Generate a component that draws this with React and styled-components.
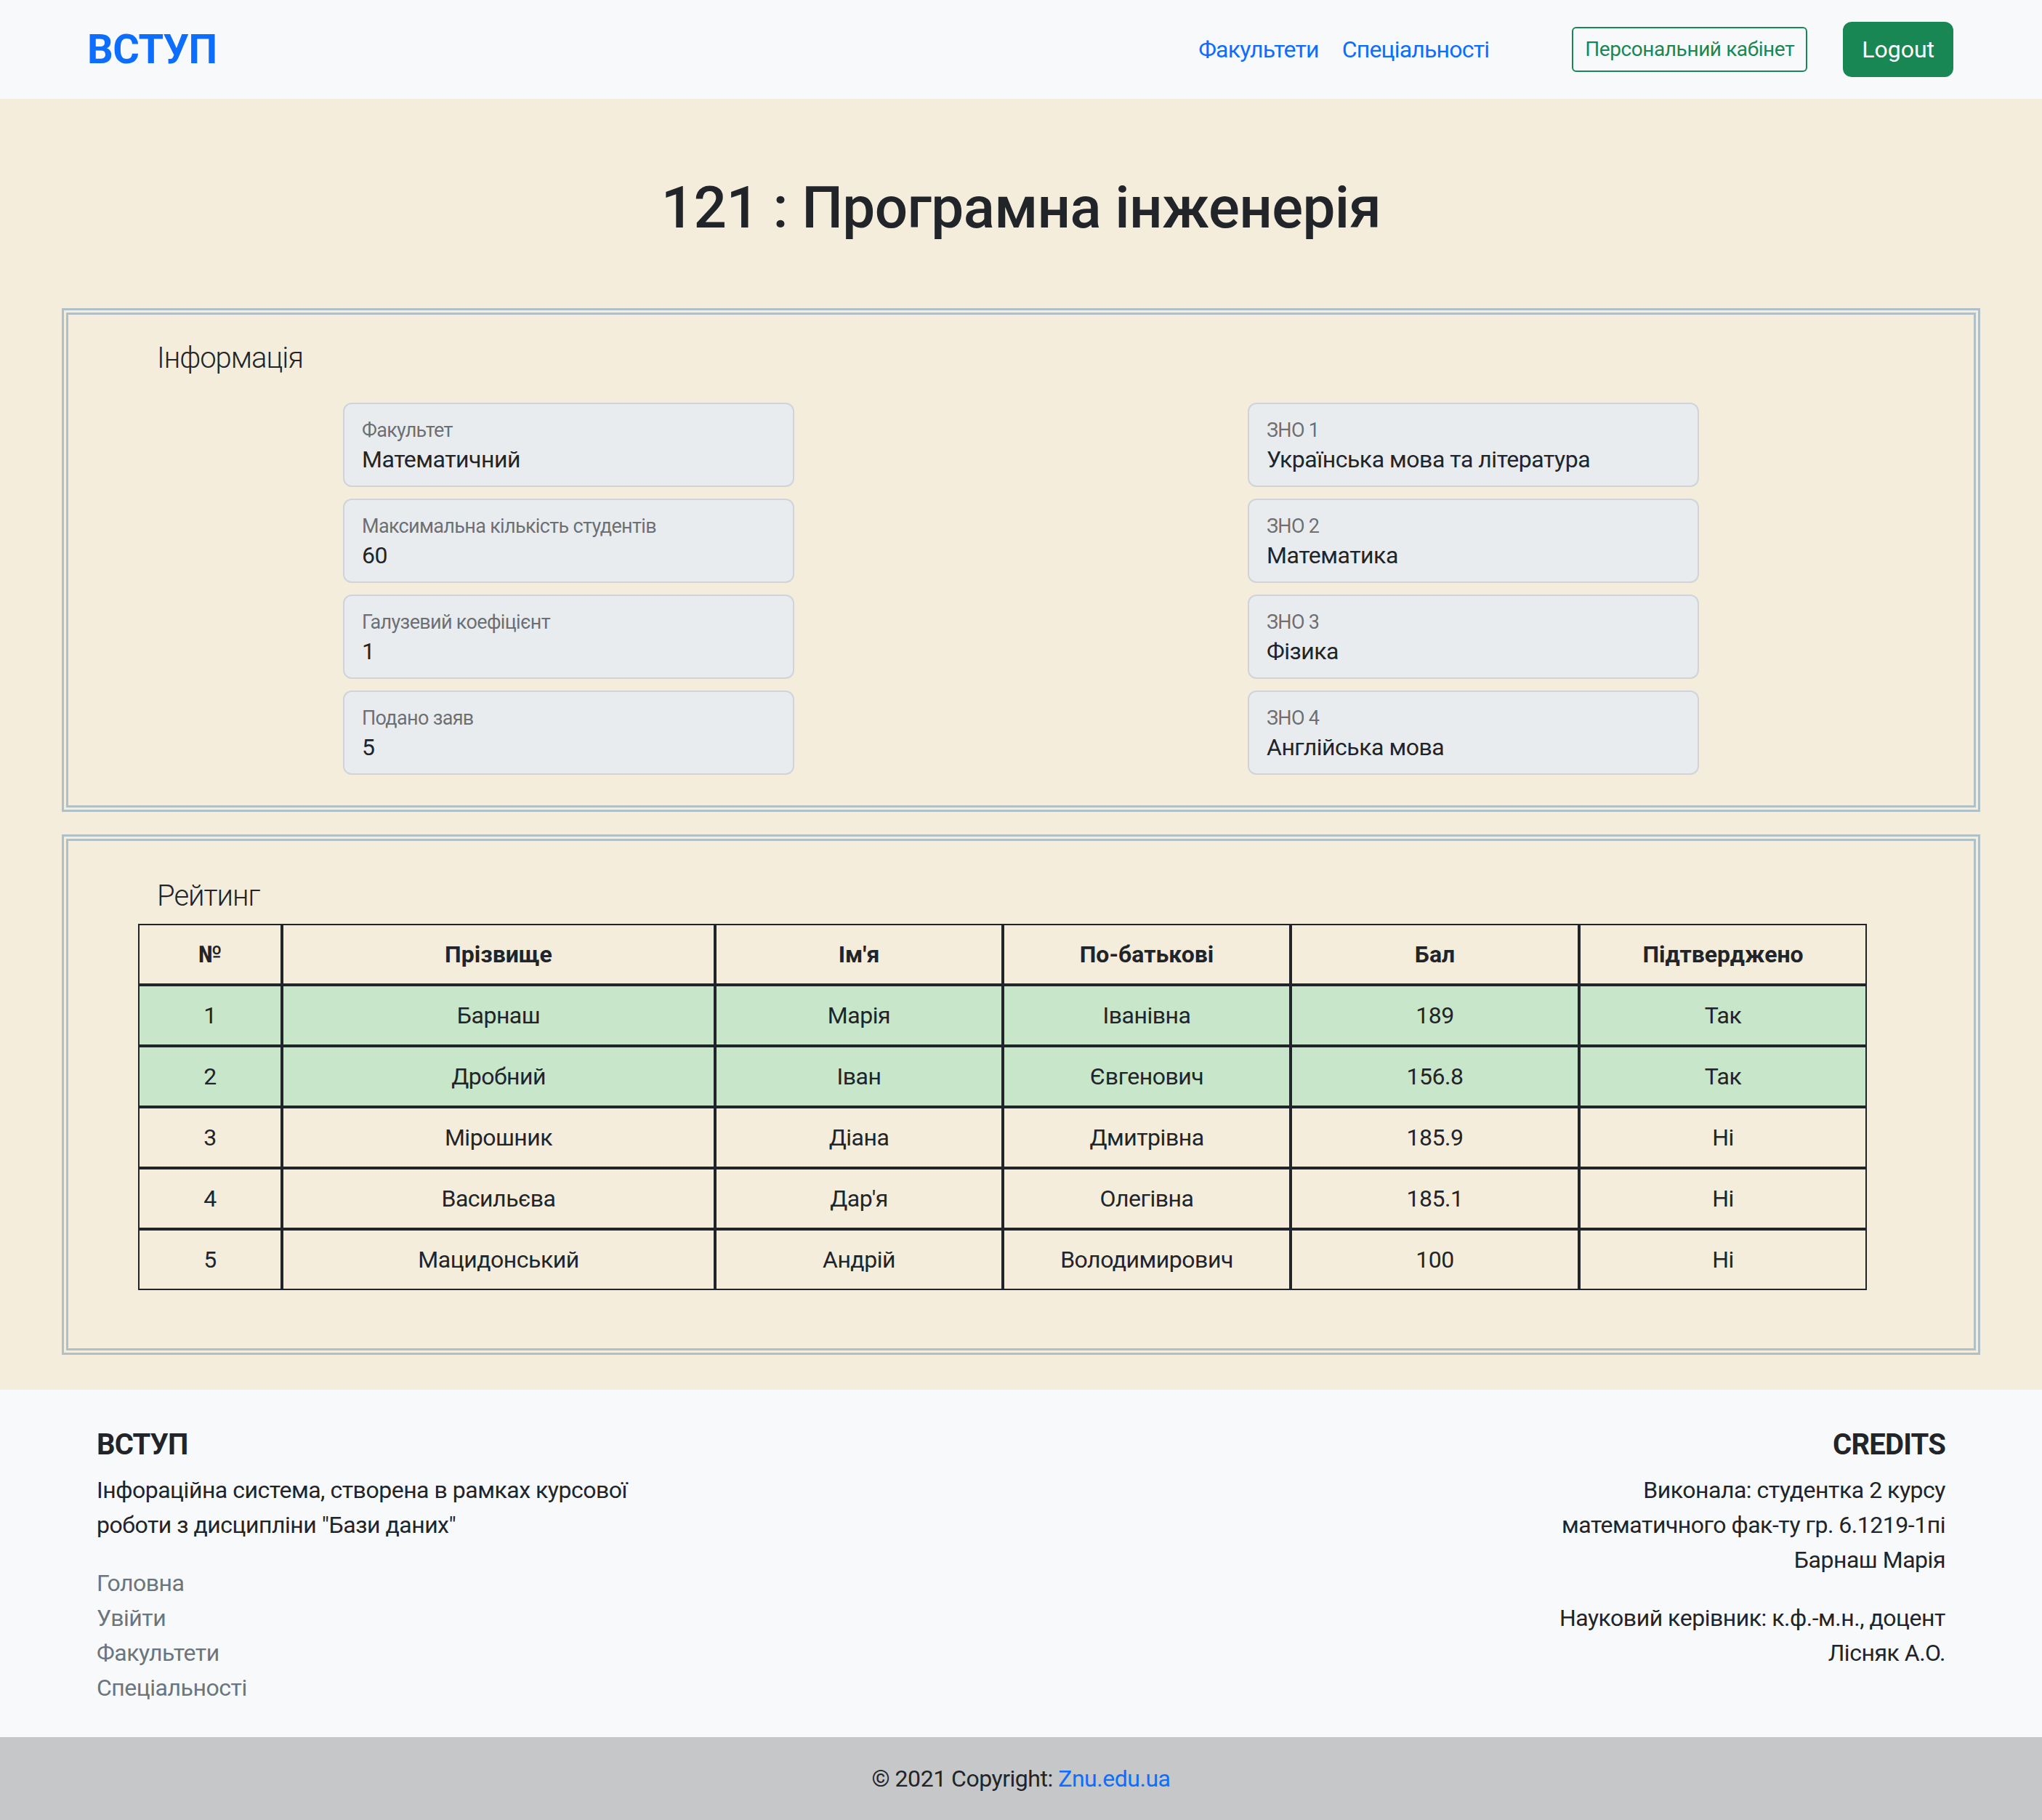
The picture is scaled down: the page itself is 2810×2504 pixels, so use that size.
import styled, { createGlobalStyle } from 'styled-components'

const GlobalStyle = createGlobalStyle`
  * { box-sizing: border-box; }
  body {
    margin: 0;
    font-family: "Segoe UI", Roboto, "Noto Sans", sans-serif;
    font-size: 32px;
    line-height: 1.5;
    letter-spacing: -0.015em;
    color: #212529;
    background: #f5eddc;
  }
  a { text-decoration: none; }
`

const Navbar = styled.nav`
  display: flex;
  align-items: center;
  height: 136px;
  padding: 0 122px 0 120px;
  background: #f8f9fa;
`

const Brand = styled.a`
  font-size: 56px;
  font-weight: 700;
  line-height: 1.5;
  letter-spacing: -0.01em;
  color: #0d6efd;
`

const NavLinks = styled.div`
  display: flex;
  margin-left: auto;
`

const NavLink = styled.a`
  padding: 0 16px;
  color: #0d6efd;
  font-size: 32px;
  letter-spacing: -0.025em;
`

const Actions = styled.div`
  display: flex;
  align-items: center;
  gap: 49px;
  margin-left: 98px;
`

const Button = styled.button`
  font-family: inherit;
  border: 2px solid #198754;
  cursor: pointer;
  ${({ $small }) => $small ? `
    font-size: 28px;
    line-height: 42px;
    padding: 8px 16px;
    border-radius: 6px;
    background: transparent;
    color: #198754;
    letter-spacing: -0.015em;
  ` : `
    font-size: 32px;
    line-height: 48px;
    padding: 12px 24px;
    border-radius: 12px;
    background: #198754;
    color: #fff;
    letter-spacing: 0;
  `}
`

const Main = styled.main`
  padding: 102px 0 48px;
  background: #f5eddc;
`

const Title = styled.h1`
  margin: 0 0 90px;
  text-align: center;
  font-size: 80px;
  font-weight: 500;
  line-height: 1.2;
  letter-spacing: -0.008em;
`

const Panel = styled.section`
  width: 2640px;
  margin: 0 auto;
  border: 9px double #afc0c9;
  padding: ${({ $pad }) => $pad};
  & + & { margin-top: 31px; }
`

const PanelTitle = styled.h5`
  margin: 0 0 ${({ $mb }) => $mb}px;
  padding-left: 122px;
  font-size: 40px;
  font-weight: 300;
  line-height: 48px;
  letter-spacing: -0.025em;
`

const FieldGrid = styled.div`
  display: grid;
  grid-template-columns: 621px 621px;
  grid-template-rows: repeat(4, auto);
  grid-auto-flow: column;
  column-gap: 624px;
  row-gap: 16px;
  justify-content: center;
`

const Field = styled.div`
  display: flex;
  flex-direction: column;
  height: 116px;
  padding: 20px 24px 12px;
  border: 2px solid #ced4da;
  border-radius: 12px;
  background: #e9ecef;
`

const FieldLabel = styled.span`
  font-size: 27px;
  line-height: 32px;
  letter-spacing: -0.025em;
  color: rgba(33, 37, 41, 0.65);
`

const FieldValue = styled.span`
  font-size: 32px;
  line-height: 48px;
`

const Table = styled.table`
  width: 2379px;
  margin-left: 96px;
  border-collapse: separate;
  border-spacing: 0;
`

const Row = styled.tr`
  background: ${({ $ok }) => ($ok ? '#c8e6c9' : 'transparent')};
`

const Th = styled.th`
  width: ${({ $w }) => $w}px;
  padding: 16px;
  border: 2px solid #212529;
  font-weight: 700;
  line-height: 48px;
  letter-spacing: 0;
  text-align: center;
`

const Td = styled.td`
  padding: 16px;
  border: 2px solid #212529;
  line-height: 48px;
  text-align: center;
`

const Footer = styled.footer`
  background: #f8f9fa;
`

const FooterInner = styled.div`
  display: flex;
  justify-content: space-between;
  width: 2640px;
  margin: 0 auto;
  padding: 52px 48px 44px;
`

const FooterCol = styled.div`
  text-align: ${({ $right }) => ($right ? 'right' : 'left')};
`

const FooterHeading = styled.h5`
  margin: 0 0 14px;
  font-size: 40px;
  font-weight: 700;
  line-height: 48px;
  letter-spacing: -0.02em;
  text-transform: uppercase;
`

const FooterText = styled.p`
  margin: 0 0 32px;
  line-height: 48px;
  &:last-child { margin-bottom: 0; }
`

const FooterLinks = styled.ul`
  list-style: none;
  margin: 0;
  padding: 0;
  li { line-height: 48px; }
  a { color: #6c757d; }
`

const Copyright = styled.div`
  padding: 33px;
  background: #c6c7c8;
  text-align: center;
  line-height: 48px;
  a { color: #0d6efd; }
`

const fieldsLeft = [
  ['Факультет', 'Математичний'],
  ['Максимальна кількість студентів', '60'],
  ['Галузевий коефіцієнт', '1'],
  ['Подано заяв', '5'],
]

const fieldsRight = [
  ['ЗНО 1', 'Українська мова та література'],
  ['ЗНО 2', 'Математика'],
  ['ЗНО 3', 'Фізика'],
  ['ЗНО 4', 'Англійська мова'],
]

const columns = [
  ['№', 198],
  ['Прізвище', 596],
  ["Ім'я", 396],
  ['По-батькові', 396],
  ['Бал', 397],
  ['Підтверджено', 396],
]

const rating = [
  ['1', 'Барнаш', 'Марія', 'Іванівна', '189', 'Так'],
  ['2', 'Дробний', 'Іван', 'Євгенович', '156.8', 'Так'],
  ['3', 'Мірошник', 'Діана', 'Дмитрівна', '185.9', 'Ні'],
  ['4', 'Васильєва', "Дар'я", 'Олегівна', '185.1', 'Ні'],
  ['5', 'Мацидонський', 'Андрій', 'Володимирович', '100', 'Ні'],
]

const App = () => {
  return (
    <>
      <GlobalStyle />
      <Navbar>
        <Brand href="#">ВСТУП</Brand>
        <NavLinks>
          <NavLink href="#">Факультети</NavLink>
          <NavLink href="#">Спеціальності</NavLink>
        </NavLinks>
        <Actions>
          <Button $small>Персональний кабінет</Button>
          <Button>Logout</Button>
        </Actions>
      </Navbar>

      <Main>
        <Title>121 : Програмна інженерія</Title>

        <Panel $pad="36px 0 42px">
          <PanelTitle $mb={37}>Інформація</PanelTitle>
          <FieldGrid>
            {[...fieldsLeft, ...fieldsRight].map(([label, value]) => (
              <Field key={label}>
                <FieldLabel>{label}</FieldLabel>
                <FieldValue>{value}</FieldValue>
              </Field>
            ))}
          </FieldGrid>
        </Panel>

        <Panel $pad="52px 0 80px">
          <PanelTitle $mb={14}>Рейтинг</PanelTitle>
          <Table>
            <thead>
              <tr>
                {columns.map(([name, w]) => (
                  <Th key={name} $w={w}>{name}</Th>
                ))}
              </tr>
            </thead>
            <tbody>
              {rating.map((r) => (
                <Row key={r[0]} $ok={r[5] === 'Так'}>
                  {r.map((cell, i) => (
                    <Td key={i}>{cell}</Td>
                  ))}
                </Row>
              ))}
            </tbody>
          </Table>
        </Panel>
      </Main>

      <Footer>
        <FooterInner>
          <FooterCol>
            <FooterHeading>ВСТУП</FooterHeading>
            <FooterText>
              Інфораційна система, створена в рамках курсової
              <br />
              роботи з дисципліни "Бази даних"
            </FooterText>
            <FooterLinks>
              <li><a href="#">Головна</a></li>
              <li><a href="#">Увійти</a></li>
              <li><a href="#">Факультети</a></li>
              <li><a href="#">Спеціальності</a></li>
            </FooterLinks>
          </FooterCol>
          <FooterCol $right>
            <FooterHeading>Credits</FooterHeading>
            <FooterText>
              Виконала: студентка 2 курсу
              <br />
              математичного фак-ту гр. 6.1219-1пі
              <br />
              Барнаш Марія
            </FooterText>
            <FooterText>
              Науковий керівник: к.ф.-м.н., доцент
              <br />
              Лісняк А.О.
            </FooterText>
          </FooterCol>
        </FooterInner>
        <Copyright>
          © 2021 Copyright: <a href="#">Znu.edu.ua</a>
        </Copyright>
      </Footer>
    </>
  )
}

export default App
